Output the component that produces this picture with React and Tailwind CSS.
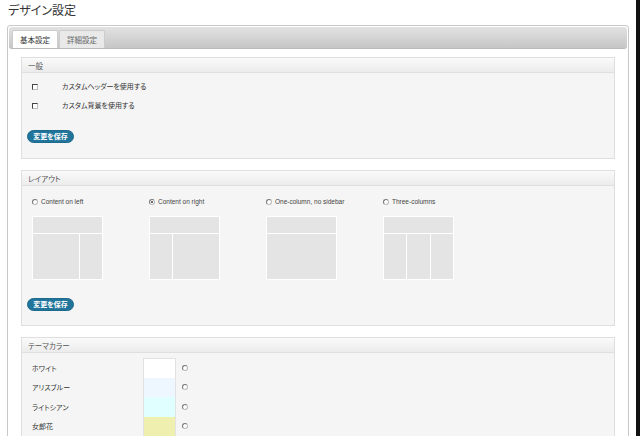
import React from 'react';

const jp = "font-['Noto_Sans_CJK_JP','Noto_Sans',sans-serif] [font-feature-settings:'palt']";
const en = "font-['Liberation_Sans',Arial,sans-serif]";

function Radio({ checked }) {
  return (
    <span className="relative inline-block w-[6px] h-[6px] rounded-full border border-[#777] border-r-[#bbb] border-b-[#bbb] bg-white shrink-0">
      {checked && <span className="absolute left-[1px] top-[1px] w-[2px] h-[2px] rounded-full bg-[#333]" />}
    </span>
  );
}

function Checkbox() {
  return <span className="inline-block w-[6px] h-[6px] border border-[#444] border-r-[#bbb] border-b-[#bbb] bg-white shrink-0" />;
}

function SaveButton() {
  return (
    <button className={`${jp} w-[47px] h-[13px] rounded-full bg-[#21759b] text-white text-[7px] font-bold leading-[11px] border border-[#1e6a8d]`}>
      変更を保存
    </button>
  );
}

function Section({ title, children, className = '' }) {
  return (
    <div className={`border border-[#dfdfdf] bg-[#f5f5f5] ${className}`}>
      <div className={`${jp} h-[15px] px-[6px] text-[7.5px] leading-[15px] text-[#555] bg-gradient-to-b from-[#fafafa] to-[#ececec] border-b border-[#dfdfdf]`}>
        {title}
      </div>
      {children}
    </div>
  );
}

function Thumb({ type }) {
  const cell = 'bg-[#e3e4e3]';
  let cols;
  if (type === 'left') cols = (<><div className={`${cell} flex-1`} /><div className={`${cell} w-[22px]`} /></>);
  else if (type === 'right') cols = (<><div className={`${cell} w-[22px]`} /><div className={`${cell} flex-1`} /></>);
  else if (type === 'one') cols = <div className={`${cell} flex-1`} />;
  else cols = (<><div className={`${cell} flex-1`} /><div className={`${cell} flex-1`} /><div className={`${cell} flex-1`} /></>);
  return (
    <div className="w-[71px] h-[64px] bg-white p-[1px] flex flex-col gap-[1px]">
      <div className={`${cell} h-[16px]`} />
      <div className="flex-1 flex gap-[1px]">{cols}</div>
    </div>
  );
}

const layouts = [
  { label: 'Content on left', type: 'left' },
  { label: 'Content on right', type: 'right', checked: true },
  { label: 'One-column, no sidebar', type: 'one' },
  { label: 'Three-columns', type: 'three' },
];

const colors = [
  { name: 'ホワイト', bg: 'bg-white' },
  { name: 'アリスブルー', bg: 'bg-[#eef6ff]' },
  { name: 'ライトシアン', bg: 'bg-[#e0ffff]' },
  { name: '女郎花', bg: 'bg-[#efefb0]' },
];

export default function App() {
  return (
    <div className="w-[640px] h-[436px] overflow-hidden bg-white flex">
      <div className="w-[636px] shrink-0">
        <h1 className={`${jp} pl-[8px] pt-[1px] h-[25px] text-[12px] leading-[17px] text-[#333]`}>デザイン設定</h1>
        <div className="ml-[7px] w-[622px] border border-[#c8c8c8] rounded-[3px] p-[1px] h-[420px]">
          <div className="h-[22px] rounded-[3px] bg-gradient-to-b from-[#e2e2e2] to-[#c6c6c6] border-b border-[#bbb] flex items-end pl-[3px] gap-[1px]">
            <div className={`${jp} h-[18px] w-[46px] bg-white rounded-t-[2px] text-[7.5px] leading-[18px] text-center text-[#333] border border-b-0 border-[#ccc]`}>基本設定</div>
            <div className={`${jp} h-[18px] w-[46px] bg-[#e9e9e9] rounded-t-[2px] text-[7.5px] leading-[18px] text-center text-[#666] border border-b-0 border-[#ccc]`}>詳細設定</div>
          </div>
          <div className="px-[12px] pt-[8px] flex flex-col gap-[11px]">
            <Section title="一般" className="h-[102px]">
              <div className="pl-[10px] pt-[10px] flex flex-col gap-[12px]">
                {['カスタムヘッダーを使用する', 'カスタム背景を使用する'].map((t) => (
                  <div key={t} className="flex items-center h-[7px]">
                    <Checkbox />
                    <span className={`${jp} ml-[24px] text-[7px] text-[#333]`}>{t}</span>
                  </div>
                ))}
              </div>
              <div className="pl-[5px] pt-[12px]"><SaveButton /></div>
            </Section>
            <Section title="レイアウト" className="h-[156px]">
              <div className="pl-[10px] pt-[12px] flex">
                {layouts.map((l) => (
                  <div key={l.label} className="w-[117px] flex flex-col">
                    <div className="flex items-center gap-[3px] h-[8px]">
                      <Radio checked={l.checked} />
                      <span className={`${en} text-[6.5px] text-[#444]`}>{l.label}</span>
                    </div>
                    <div className="mt-[10px]"><Thumb type={l.type} /></div>
                  </div>
                ))}
              </div>
              <div className="pl-[5px] pt-[9px]"><SaveButton /></div>
            </Section>
            <Section title="テーマカラー" className="h-[120px]">
              <div className="pt-[5px]">
                {colors.map((c, i) => (
                  <div key={c.name} className="flex items-center h-[19.5px]">
                    <span className={`${jp} w-[121px] pl-[10px] text-[7px] text-[#333]`}>{c.name}</span>
                    <span className={`w-[33px] h-full ${c.bg} border-x border-[#e2e2e2] ${i === 0 ? 'border-t' : ''}`} />
                    <span className="ml-[6px] flex"><Radio /></span>
                  </div>
                ))}
              </div>
            </Section>
          </div>
        </div>
      </div>
      <div className="flex-1 bg-[#111]" />
    </div>
  );
}
